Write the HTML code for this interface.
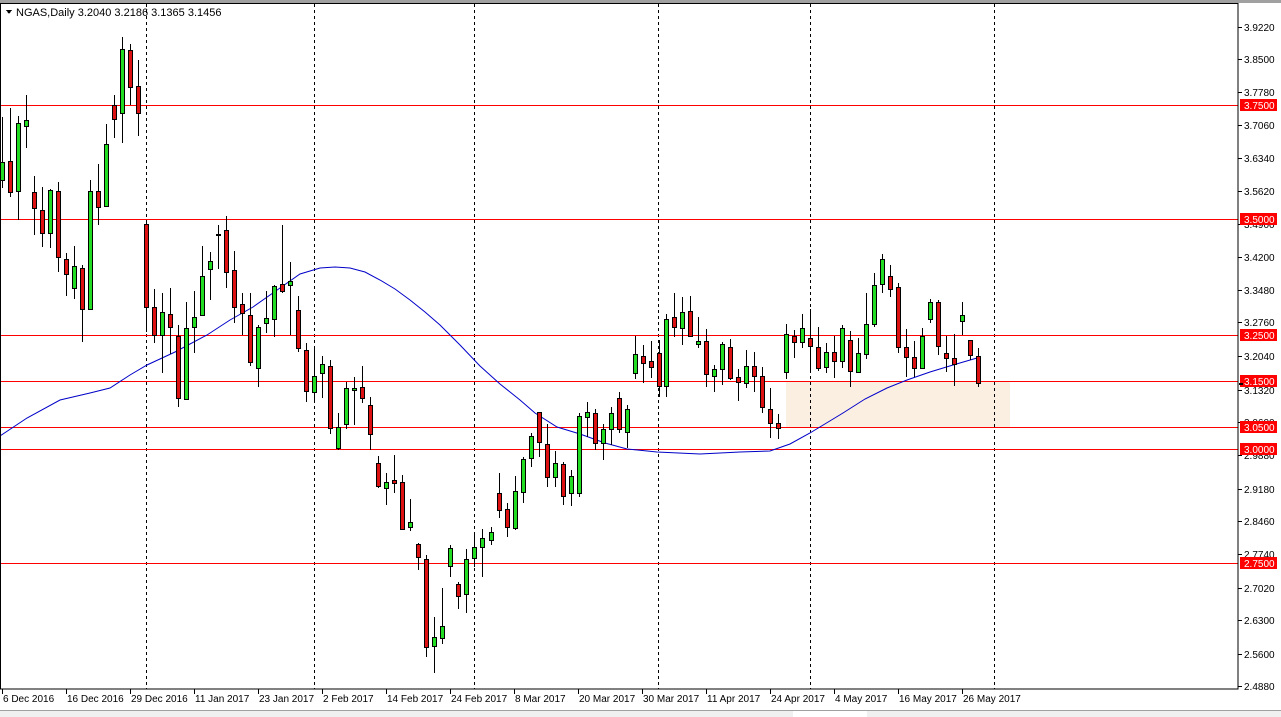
<!DOCTYPE html>
<html><head><meta charset="utf-8">
<style>
html,body{margin:0;padding:0;background:#fff;width:1281px;height:717px;overflow:hidden;font-family:"Liberation Sans",sans-serif}
svg text{font-family:"Liberation Sans",sans-serif;font-size:10px}
</style></head><body>
<svg id="s" width="1281" height="717" xmlns="http://www.w3.org/2000/svg" shape-rendering="crispEdges">
<rect x="0" y="0" width="1281" height="717" fill="#fff"/>
<rect x="0" y="0" width="1281" height="3" fill="#a0a0a0"/>
<rect x="786" y="381" width="224" height="46" fill="#fbefe2"/>
<g id="dash" stroke="#000" stroke-dasharray="3,3" stroke-width="1">
<line x1="146.5" y1="4" x2="146.5" y2="689"/><line x1="314.5" y1="4" x2="314.5" y2="689"/>
<line x1="474.5" y1="4" x2="474.5" y2="689"/><line x1="658.5" y1="4" x2="658.5" y2="689"/>
<line x1="810.5" y1="4" x2="810.5" y2="689"/><line x1="994.5" y1="4" x2="994.5" y2="689"/>
</g>
<g fill="#ff0000">
<rect x="1" y="105" width="1237" height="1"/><rect x="1" y="219" width="1237" height="1"/>
<rect x="1" y="335" width="1237" height="1"/><rect x="1" y="381" width="1237" height="1"/>
<rect x="1" y="427" width="1237" height="1"/><rect x="1" y="449" width="1237" height="1"/>
<rect x="1" y="563" width="1237" height="1"/>
</g>
<polyline shape-rendering="auto" fill="none" stroke="#0000c8" stroke-width="1" points="0,436 27,418 60,400 90,393 110,388 130,375 147,365 175,352 207,335 230,320 253,307 280,288 300,274 320,268 335,267 350,268 365,272 380,280 395,289 410,300 425,312 440,325 460,345 480,366 500,384 520,400 535,413 557,427 580,434 605,443 627,449 657,452 700,454 740,452 770,451 790,444 810,433 843,413 865,399 887,388 907,380 930,372 953,365 977,358"/>
<g id="c"></g>
<rect x="0.5" y="3.5" width="1237.5" height="685.5" fill="none" stroke="#000"/>
<path d="M6 10 L12 10 L9 14 Z" fill="#000"/>
<text x="16" y="16" style="font-size:11px">NGAS,Daily  3.2040 3.2186 3.1365 3.1456</text>
<g id="ax" font-size="10"></g>
<rect x="0" y="710" width="1281" height="7" fill="#f0f0f0"/>
<rect x="0" y="710" width="1281" height="1" fill="#a0a0a0"/>
<rect x="793" y="711" width="74" height="6" fill="#fff"/>
</svg>
<script>
var D=[[2,117,162,180,188,'g'],[10,108,161,192,197,'r'],[18,116,123,191,220,'g'],[26,95,120,126,148,'g'],[34,176,192,208,235,'r'],[42,187,210,233,247,'r'],[50,189,190,233,248,'g'],[58,182,191,257,272,'r'],[66,253,259,274,296,'r'],[74,246,266,288,299,'g'],[82,265,268,309,342,'r'],[90,180,191,309,310,'g'],[98,164,191,207,225,'r'],[106,124,144,206,207,'g'],[114,95,105,119,138,'r'],[122,37,49,113,143,'g'],[130,44,50,87,105,'r'],[138,60,86,113,136,'r'],[146,220,224,307,332,'r'],[154,289,307,335,343,'r'],[162,293,312,335,373,'g'],[170,288,314,327,354,'r'],[178,325,336,398,407,'r'],[186,302,328,399,400,'g'],[194,291,317,327,353,'g'],[202,246,276,315,316,'g'],[210,252,261,269,300,'g'],[218,225,234,235,269,'g'],[226,216,230,272,288,'r'],[234,251,270,307,323,'r'],[242,293,304,313,335,'r'],[250,293,315,362,366,'r'],[258,325,327,368,387,'g'],[266,291,318,323,333,'g'],[274,285,286,319,337,'g'],[282,225,284,291,293,'r'],[290,262,281,285,335,'g'],[298,296,310,348,352,'r'],[306,343,350,391,402,'r'],[314,347,376,392,402,'g'],[322,356,364,373,398,'g'],[330,360,366,428,434,'r'],[338,413,427,448,450,'g'],[346,382,388,424,429,'g'],[354,377,388,390,425,'g'],[362,366,387,398,403,'r'],[370,397,405,434,450,'r'],[378,456,463,486,488,'r'],[386,473,482,488,505,'g'],[394,455,480,483,493,'r'],[402,475,482,529,530,'r'],[410,499,522,527,531,'g'],[418,543,544,557,570,'r'],[426,555,559,647,657,'r'],[434,617,637,646,673,'g'],[442,588,626,638,644,'g'],[450,545,548,566,577,'g'],[458,582,584,596,609,'r'],[466,549,559,594,613,'g'],[474,532,547,558,567,'g'],[482,529,538,547,577,'g'],[491,527,532,540,545,'g'],[499,473,493,510,518,'r'],[507,503,509,527,537,'r'],[515,476,491,528,530,'g'],[523,457,459,492,503,'g'],[531,433,436,458,467,'g'],[539,412,412,442,457,'r'],[547,424,444,477,487,'r'],[555,451,463,477,487,'g'],[563,462,464,496,505,'r'],[571,470,476,493,506,'g'],[579,413,416,493,497,'g'],[587,402,412,417,437,'g'],[595,409,413,443,450,'r'],[603,424,429,443,460,'g'],[611,407,413,429,445,'g'],[619,392,398,429,433,'r'],[627,405,409,432,448,'g'],[635,336,354,373,379,'g'],[643,345,356,363,383,'r'],[651,341,361,367,378,'r'],[659,340,353,386,397,'r'],[666,314,319,386,397,'g'],[674,293,317,327,337,'r'],[682,297,312,328,345,'g'],[690,296,311,336,337,'r'],[698,317,341,344,348,'g'],[706,329,341,374,387,'r'],[714,365,369,376,392,'g'],[722,342,344,369,385,'g'],[730,339,347,378,380,'r'],[738,369,377,382,401,'r'],[746,350,366,383,388,'g'],[754,352,366,376,392,'r'],[762,367,376,407,413,'r'],[770,388,409,423,438,'r'],[778,414,423,428,439,'r'],[786,324,334,372,379,'g'],[794,330,336,342,358,'r'],[802,314,328,342,348,'g'],[810,309,338,346,370,'r'],[818,327,347,368,371,'r'],[826,343,352,367,373,'g'],[834,336,352,361,378,'r'],[842,325,328,361,368,'g'],[850,331,340,371,387,'r'],[858,338,353,372,373,'g'],[866,293,324,354,359,'g'],[874,273,285,324,327,'g'],[882,254,259,284,293,'g'],[890,265,276,289,297,'r'],[898,283,287,347,353,'r'],[906,329,347,357,377,'r'],[914,341,357,368,377,'r'],[922,328,336,368,368,'g'],[930,299,302,319,323,'g'],[938,300,302,346,355,'r'],[946,336,353,358,372,'r'],[954,334,358,364,386,'r'],[962,302,315,321,335,'g'],[970,340,340,355,360,'r'],[978,348,356,383,387,'r']];
var ns="http://www.w3.org/2000/svg",g=document.getElementById('c');
function el(t,a,p){var e=document.createElementNS(ns,t);for(var k in a)e.setAttribute(k,a[k]);(p||g).appendChild(e);return e;}
D.forEach(function(d){var x=d[0]+0.5;
el('line',{x1:x,y1:d[1],x2:x,y2:d[4],stroke:'#000'});
var h=Math.max(1,d[3]-d[2]);
el('rect',{x:d[0]-2+0.5,y:d[2]+0.5,width:4,height:h,fill:d[5]=='g'?'#22dd22':'#dd1111',stroke:'#000'});
});
var ax=document.getElementById('ax');
var P=[["3.9220",27],["3.8500",59],["3.7780",92],["3.7060",125],["3.6340",158],["3.5620",191],["3.4900",224],["3.4200",257],["3.3480",290],["3.2760",322],["3.2040",356],["3.1320",390],["3.0600",422],["2.9880",455],["2.9180",489],["2.8460",521],["2.7740",554],["2.7020",588],["2.6300",620],["2.5600",654],["2.4880",686]];
P.forEach(function(p){el('line',{x1:1238,y1:p[1]+0.5,x2:1242,y2:p[1]+0.5,stroke:'#000'},ax);var t=el('text',{x:1244,y:p[1]+4,fill:'#000'},ax);t.textContent=p[0];});
[["3.7500",105],["3.5000",219],["3.2500",335],["3.1500",381],["3.0500",427],["3.0000",449],["2.7500",563]].forEach(function(p){el('rect',{x:1240,y:p[1]-6,width:37,height:12,fill:'#ff0000'},ax);var t=el('text',{x:1244,y:p[1]+4,fill:'#fff'},ax);t.textContent=p[0];});
el('rect',{x:1239,y:383,width:4,height:2,fill:'#000'},ax);
var L=[["6 Dec 2016",2],["16 Dec 2016",66],["29 Dec 2016",130],["11 Jan 2017",194],["23 Jan 2017",258],["2 Feb 2017",322],["14 Feb 2017",386],["24 Feb 2017",450],["8 Mar 2017",514],["20 Mar 2017",578],["30 Mar 2017",642],["11 Apr 2017",706],["24 Apr 2017",770],["4 May 2017",834],["16 May 2017",898],["26 May 2017",962]];
L.forEach(function(l){el('line',{x1:l[1]+0.5,y1:689,x2:l[1]+0.5,y2:694,stroke:'#000'},ax);var t=el('text',{x:l[1]+1,y:702,fill:'#000'},ax);t.textContent=l[0];});
</script>
</body></html>
